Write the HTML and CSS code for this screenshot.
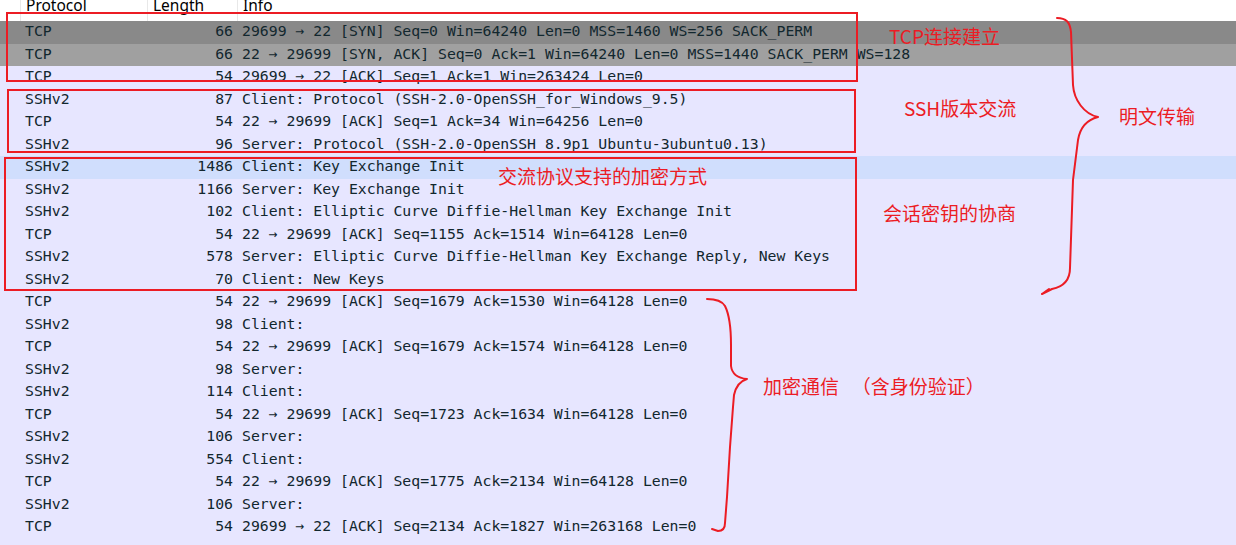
FILE: index.html
```html
<!DOCTYPE html>
<html lang="zh-CN">
<head>
  <meta charset="UTF-8">
  <meta name="viewport" content="width=device-width, initial-scale=1.0">
  <title>SSH 抓包分析</title>
  <link rel="stylesheet" href="styles.css">
</head>
<body>
  <div class="capture">
    <div class="head">
      <div class="hcell"></div>
      <div class="hcell">Protocol</div>
      <div class="hcell">Length</div>
      <div class="hcell">Info</div>
    </div>

    <div class="packets">
      <div class="row syn"><span></span><span class="proto">TCP</span><span class="len">66</span><span class="info">29699 → 22 [SYN] Seq=0 Win=64240 Len=0 MSS=1460 WS=256 SACK_PERM</span></div>
      <div class="row synack"><span></span><span class="proto">TCP</span><span class="len">66</span><span class="info">22 → 29699 [SYN, ACK] Seq=0 Ack=1 Win=64240 Len=0 MSS=1440 SACK_PERM WS=128</span></div>
      <div class="row"><span></span><span class="proto">TCP</span><span class="len">54</span><span class="info">29699 → 22 [ACK] Seq=1 Ack=1 Win=263424 Len=0</span></div>
      <div class="row"><span></span><span class="proto">SSHv2</span><span class="len">87</span><span class="info">Client: Protocol (SSH-2.0-OpenSSH_for_Windows_9.5)</span></div>
      <div class="row"><span></span><span class="proto">TCP</span><span class="len">54</span><span class="info">22 → 29699 [ACK] Seq=1 Ack=34 Win=64256 Len=0</span></div>
      <div class="row"><span></span><span class="proto">SSHv2</span><span class="len">96</span><span class="info">Server: Protocol (SSH-2.0-OpenSSH_8.9p1 Ubuntu-3ubuntu0.13)</span></div>
      <div class="row hover"><span></span><span class="proto">SSHv2</span><span class="len">1486</span><span class="info">Client: Key Exchange Init</span></div>
      <div class="row"><span></span><span class="proto">SSHv2</span><span class="len">1166</span><span class="info">Server: Key Exchange Init</span></div>
      <div class="row"><span></span><span class="proto">SSHv2</span><span class="len">102</span><span class="info">Client: Elliptic Curve Diffie-Hellman Key Exchange Init</span></div>
      <div class="row"><span></span><span class="proto">TCP</span><span class="len">54</span><span class="info">22 → 29699 [ACK] Seq=1155 Ack=1514 Win=64128 Len=0</span></div>
      <div class="row"><span></span><span class="proto">SSHv2</span><span class="len">578</span><span class="info">Server: Elliptic Curve Diffie-Hellman Key Exchange Reply, New Keys</span></div>
      <div class="row"><span></span><span class="proto">SSHv2</span><span class="len">70</span><span class="info">Client: New Keys</span></div>
      <div class="row"><span></span><span class="proto">TCP</span><span class="len">54</span><span class="info">22 → 29699 [ACK] Seq=1679 Ack=1530 Win=64128 Len=0</span></div>
      <div class="row"><span></span><span class="proto">SSHv2</span><span class="len">98</span><span class="info">Client:</span></div>
      <div class="row"><span></span><span class="proto">TCP</span><span class="len">54</span><span class="info">22 → 29699 [ACK] Seq=1679 Ack=1574 Win=64128 Len=0</span></div>
      <div class="row"><span></span><span class="proto">SSHv2</span><span class="len">98</span><span class="info">Server:</span></div>
      <div class="row"><span></span><span class="proto">SSHv2</span><span class="len">114</span><span class="info">Client:</span></div>
      <div class="row"><span></span><span class="proto">TCP</span><span class="len">54</span><span class="info">22 → 29699 [ACK] Seq=1723 Ack=1634 Win=64128 Len=0</span></div>
      <div class="row"><span></span><span class="proto">SSHv2</span><span class="len">106</span><span class="info">Server:</span></div>
      <div class="row"><span></span><span class="proto">SSHv2</span><span class="len">554</span><span class="info">Client:</span></div>
      <div class="row"><span></span><span class="proto">TCP</span><span class="len">54</span><span class="info">22 → 29699 [ACK] Seq=1775 Ack=2134 Win=64128 Len=0</span></div>
      <div class="row"><span></span><span class="proto">SSHv2</span><span class="len">106</span><span class="info">Server:</span></div>
      <div class="row"><span></span><span class="proto">TCP</span><span class="len">54</span><span class="info">29699 → 22 [ACK] Seq=2134 Ack=1827 Win=263168 Len=0</span></div>
    </div>

    <!-- red pen notes drawn over the packet list -->
    <div class="notes">
      <svg class="marks" width="1236" height="545" viewBox="0 0 1236 545">
        <g fill="none" stroke="#ec1c24" stroke-width="2">
          <rect x="7" y="13" width="850" height="68"/>
          <rect x="8" y="90" width="847" height="62"/>
          <rect x="5" y="158" width="851" height="132"/>
        </g>
        <g fill="none" stroke="#ec1c24" stroke-width="2" stroke-linecap="round" stroke-linejoin="round">
          <path d="M1057,18 C1066,18 1070,22 1071,32 L1073,85 C1074,100 1084,114 1098,117 C1086,120 1080,128 1078,140 L1073,180 L1070,268 C1070,282 1062,287 1052,289 L1042,294 M1042,294 L1049,289"/>
          <path d="M707,299 C716,299 722,301 725,306 C729,314 731,330 731,345 L731,366 C732,374 737,378 747,379 C740,381 736,386 734,395 L733,407 L730,447 L727,497 L725,523 C725,529 722,531 718,531 L712,529"/>
        </g>
      </svg>
      <div class="note note-tcp">TCP连接建立</div>
      <div class="note note-ver">SSH版本交流</div>
      <div class="note note-plain">明文传输</div>
      <div class="note note-algo">交流协议支持的加密方式</div>
      <div class="note note-key">会话密钥的协商</div>
      <div class="note note-enc">加密通信   （含身份验证）</div>
    </div>
  </div>
</body>
</html>
```

FILE: styles.css
```css
body {
  margin: 0;
  background: #e7e6ff;
  overflow: hidden;
}

.capture {
  position: relative;
  width: 1236px;
  height: 545px;
  overflow: hidden;
}

.head {
  display: grid;
  grid-template-columns: 20px 127px 90px 1fr;
  height: 21px;
  background: #fff;
  overflow: hidden;
}

.hcell {
  font-family: "Noto Sans", "Open Sans", sans-serif;
  font-size: 15.5px;
  line-height: 11px;
  color: #000;
  padding-left: 5px;
  border-left: 1px solid #e8e8e8;
}

.hcell:first-child {
  border-left: none;
}

.packets {
  font-family: "DejaVu Sans Mono", "Liberation Mono", monospace;
  font-size: 14.8px;
  color: #12272e;
}

.row {
  display: grid;
  grid-template-columns: 20px 127px 90px 1fr;
  height: 22.5px;
  line-height: 20px;
  white-space: pre;
}

.row.syn {
  background: #898989;
}

.row.synack {
  background: #a0a0a0;
}

.row.hover {
  background: #d0defd;
}

.proto {
  padding-left: 5px;
}

.len {
  text-align: right;
  padding-right: 4px;
}

.info {
  padding-left: 5px;
}

.notes {
  position: absolute;
  top: 0;
  left: 0;
  width: 1236px;
  height: 545px;
  pointer-events: none;
}

.marks {
  position: absolute;
  top: 0;
  left: 0;
}

.note {
  position: absolute;
  font-family: "Noto Sans CJK SC", "Noto Sans", sans-serif;
  font-size: 19px;
  line-height: 19px;
  color: #ec1c24;
  white-space: pre;
}

.note-tcp { left: 889px; top: 26px; }
.note-ver { left: 904px; top: 98px; }
.note-plain { left: 1119px; top: 106px; }
.note-algo { left: 498px; top: 166px; }
.note-key { left: 883px; top: 203px; }
.note-enc { left: 763px; top: 376px; }
```
